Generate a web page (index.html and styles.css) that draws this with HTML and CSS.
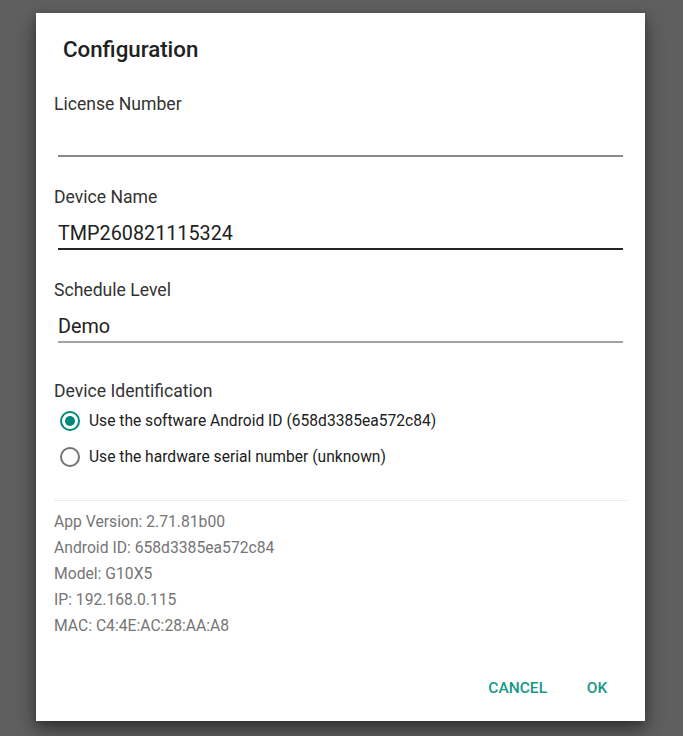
FILE: index.html
```html
<!DOCTYPE html>
<html>
<head>
<meta charset="utf-8">
<link rel="stylesheet" href="styles.css">
</head>
<body>
<div class="dialog">
  <div class="title">Configuration</div>

  <div class="field first">
    <div class="label">License Number</div>
    <div class="input grey"></div>
  </div>

  <div class="field">
    <div class="label">Device Name</div>
    <div class="input dark">TMP260821115324</div>
  </div>

  <div class="field">
    <div class="label">Schedule Level</div>
    <div class="input light">Demo</div>
  </div>

  <div class="label ident">Device Identification</div>
  <div class="radios">
    <div class="radio-row">
      <span class="radio checked"><span class="dot"></span></span>
      <span class="radio-text">Use the software Android ID (658d3385ea572c84)</span>
    </div>
    <div class="radio-row">
      <span class="radio"></span>
      <span class="radio-text">Use the hardware serial number (unknown)</span>
    </div>
  </div>

  <div class="divider"></div>

  <div class="info">
    <div>App Version: 2.71.81b00</div>
    <div>Android ID: 658d3385ea572c84</div>
    <div>Model: G10X5</div>
    <div>IP: 192.168.0.115</div>
    <div>MAC: C4:4E:AC:28:AA:A8</div>
  </div>

  <div class="actions">
    <span class="btn">CANCEL</span>
    <span class="btn">OK</span>
  </div>
</div>
</body>
</html>
```

FILE: styles.css
```css
html, body {
  margin: 0;
  padding: 0;
}
body {
  width: 683px;
  height: 736px;
  background: #5f5f5f;
  font-family: Roboto, "Noto Sans", sans-serif;
  overflow: hidden;
}
.dialog {
  box-sizing: border-box;
  margin: 13px 0 0 36px;
  width: 609px;
  height: 708px;
  background: #ffffff;
  box-shadow: 0 10px 20px rgba(0,0,0,0.38), 0 3px 8px rgba(0,0,0,0.25);
  padding: 23px 0 0 0;
  display: flex;
  flex-direction: column;
}
.title {
  padding-left: 27px;
  font-size: 22.3px;
  line-height: 26px;
  font-weight: 500;
  color: #212121;
}
.field {
  margin-top: 30px;
}
.field.first {
  margin-top: 32px;
}
.label {
  padding-left: 18px;
  font-size: 17.6px;
  line-height: 20px;
  color: #333333;
}
.input {
  margin: 0 22px;
  padding-top: 15px;
  padding-bottom: 2px;
  height: 24px;
  font-size: 19.8px;
  line-height: 24px;
  color: #212121;
}
.input.grey { border-bottom: 2px solid #8a8a8a; }
.input.dark { border-bottom: 2px solid #262626; }
.input.light { border-bottom: 2px solid #a3a3a3; }

.label.ident {
  margin-top: 38px;
}
.radios {
  margin-top: 2px;
  padding-left: 24px;
}
.radio-row {
  height: 36px;
  display: flex;
  align-items: center;
}
.radio {
  box-sizing: border-box;
  width: 20px;
  height: 20px;
  border: 2px solid #737373;
  border-radius: 50%;
  display: flex;
  align-items: center;
  justify-content: center;
  margin-right: 9px;
  flex: none;
}
.radio.checked {
  border-color: #00897b;
}
.dot {
  width: 10px;
  height: 10px;
  border-radius: 50%;
  background: #00897b;
}
.radio-text {
  font-size: 15.6px;
  line-height: 20px;
  color: #212121;
}
.divider {
  margin: 25px 18px 0 18px;
  height: 1px;
  background: #ebebeb;
}
.info {
  margin-top: 8px;
  padding-left: 18px;
  font-size: 15.7px;
  line-height: 26px;
  color: #757575;
}
.actions {
  margin-top: 31px;
  display: flex;
  justify-content: flex-end;
  padding-right: 16px;
  gap: 10px;
}
.btn {
  min-width: 64px;
  box-sizing: border-box;
  padding: 0 8px;
  height: 36px;
  line-height: 36px;
  text-align: center;
  font-size: 15.5px;
  font-weight: 500;
  color: #169885;
}
```
